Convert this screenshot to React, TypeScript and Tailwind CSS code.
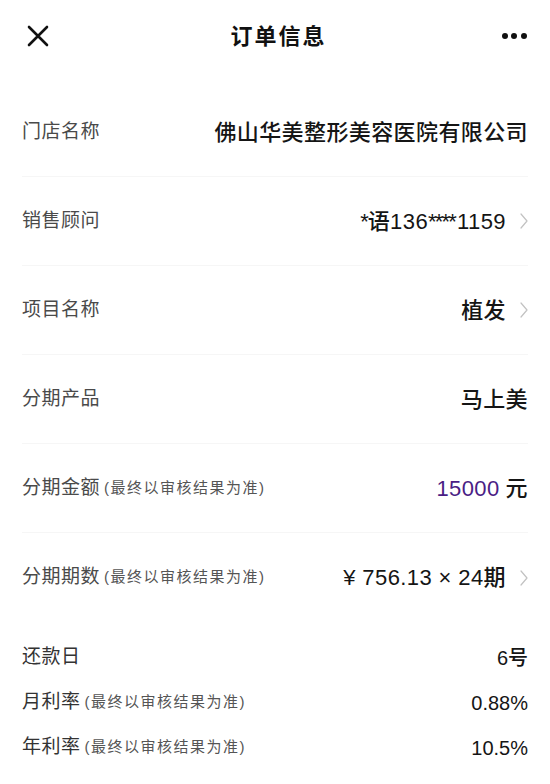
import React from "react";

const FONT = {
  fontFamily: '"Liberation Sans", "Noto Sans CJK SC", sans-serif',
};

interface InfoRow {
  label: string;
  hint?: boolean;
  value: React.ReactNode;
  arrow?: boolean;
}

const rows: InfoRow[] = [
  { label: "门店名称", value: "佛山华美整形美容医院有限公司" },
  {
    label: "销售顾问",
    value: (
      <>
        <span className="tracking-[-1px]">*</span>语136
        <span className="tracking-[-1.8px] mr-[2px]">****</span>1159
      </>
    ),
    arrow: true,
  },
  { label: "项目名称", value: "植发", arrow: true },
  { label: "分期产品", value: "马上美" },
  {
    label: "分期金额",
    hint: true,
    value: (
      <>
        <span className="text-[#4a1d85]">15000</span>
        <span className="ml-[6px]">元</span>
      </>
    ),
  },
  { label: "分期期数", hint: true, value: "¥ 756.13 × 24期", arrow: true },
];

const extraRows: InfoRow[] = [
  { label: "还款日", value: "6号" },
  { label: "月利率", hint: true, value: "0.88%" },
  { label: "年利率", hint: true, value: "10.5%" },
];

function Chevron() {
  return (
    <svg width="8" height="16" viewBox="0 0 8 16" className="ml-[14px] shrink-0">
      <polyline
        points="1,1 7,8 1,15"
        fill="none"
        stroke="#c2c2c2"
        strokeWidth="1.2"
        strokeLinecap="round"
        strokeLinejoin="round"
      />
    </svg>
  );
}

function Hint() {
  return (
    <span className="ml-[4px] text-[15px] tracking-[1.5px] text-[#555]">
      (最终以审核结果为准)
    </span>
  );
}

export default function App() {
  return (
    <div className="w-[550px] min-h-[784px] bg-white" style={FONT}>
      <header className="h-[72px] flex items-center justify-between pl-[27px] pr-[23px]">
        <svg width="22" height="22" viewBox="0 0 22 22">
          <path
            d="M2 2 L20 20 M20 2 L2 20"
            stroke="#111"
            strokeWidth="2.6"
            strokeLinecap="round"
          />
        </svg>
        <h1 className="text-[22px] font-bold tracking-[2px] text-[#111] pl-[6px]">
          订单信息
        </h1>
        <div className="flex items-center gap-[3.5px]">
          <span className="w-[6px] h-[6px] rounded-full bg-[#111]" />
          <span className="w-[6px] h-[6px] rounded-full bg-[#111]" />
          <span className="w-[6px] h-[6px] rounded-full bg-[#111]" />
        </div>
      </header>

      <ul className="mt-[16px] px-[22px]">
        {rows.map((row, i) => (
          <li
            key={row.label}
            className={`h-[89px] flex items-center justify-between ${
              i < rows.length - 1 ? "border-b border-[#f6f6f6]" : ""
            }`}
          >
            <div className="flex items-center whitespace-nowrap">
              <span className="text-[19px] tracking-[0.5px] text-[#4a4a4a]">
                {row.label}
              </span>
              {row.hint ? <Hint /> : null}
            </div>
            <div className="flex items-center whitespace-nowrap text-[22px] font-medium tracking-[0.4px] text-[#151515]">
              {row.value}
              {row.arrow ? <Chevron /> : null}
            </div>
          </li>
        ))}
      </ul>

      <ul className="pt-[13px] px-[22px] pb-[14px]">
        {extraRows.map((row) => (
          <li key={row.label} className="h-[45px] flex items-center justify-between">
            <div className="flex items-center whitespace-nowrap">
              <span className="text-[19px] tracking-[0.5px] text-[#333]">
                {row.label}
              </span>
              {row.hint ? <Hint /> : null}
            </div>
            <span className="text-[20px] font-medium text-[#151515]">{row.value}</span>
          </li>
        ))}
      </ul>
    </div>
  );
}
